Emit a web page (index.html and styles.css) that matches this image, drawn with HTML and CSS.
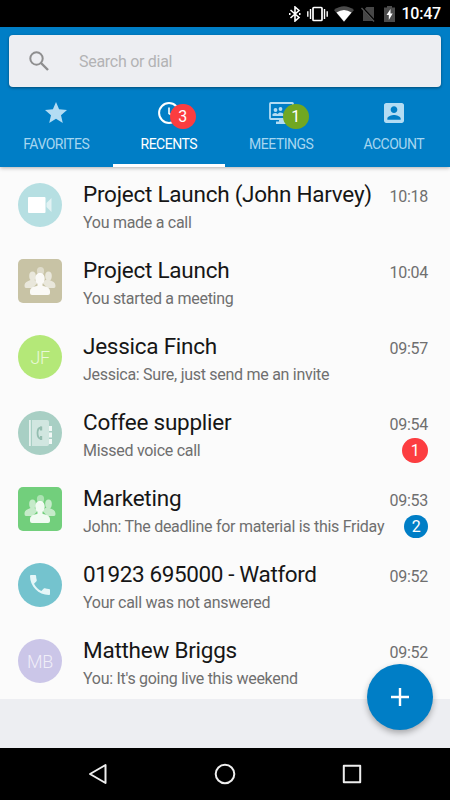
FILE: index.html
```html
<!DOCTYPE html>
<html lang="en">
<head>
<meta charset="utf-8">
<title>Recents</title>
<link rel="stylesheet" href="styles.css">
</head>
<body>
<svg class="defs" aria-hidden="true">
  <symbol id="people" viewBox="0 0 44 44">
    <g opacity=".42"><ellipse cx="22.500" cy="12" rx="3.600" ry="4"/></g>
    <g opacity=".6">
      <ellipse cx="14.500" cy="17" rx="3.300" ry="4.500"/><path d="M6.500 27c0-4 3-4.500 6-6h4l3 3-5 5H8q-1.500 0-1.500-2z"/>
      <ellipse cx="30.500" cy="17" rx="3.300" ry="4.500"/><path d="M37.500 27c0-4-3-4.500-6-6h-4l-3 3 5 5h6.500q1.500 0 1.500-2z"/>
    </g>
    <path opacity=".9" d="M17.300 19.500c0-3.500 2-5.500 4.700-5.500s4.700 2 4.700 5.500c0 2.500-.9 4.100-2.200 5.300v2c4 1.200 7.500 1.700 7.500 5.700v1.500q0 2-2 2H14q-2 0-2-2v-1.500c0-4 3.500-4.500 7.500-5.700v-2c-1.300-1.200-2.200-2.800-2.200-5.300z"/>
  </symbol>
</svg>
<div class="screen">
  <div class="status">
    <svg class="bluetooth" viewBox="0 0 12 16"><path d="M1.500 4l8.500 7.500L6 15V1l4 3.500L1.500 12" fill="none" stroke="#fff" stroke-width="1.600"/><path d="M0 7h1.500v2H0zM10 7h1.500v2H10z" fill="#fff"/></svg>
    <svg class="vibrate" viewBox="0 0 21 16"><rect x="6" y="1.500" width="9" height="13" rx=".8" fill="none" stroke="#fff" stroke-width="1.700"/><path d="M3.500 3v10M.8 5.300v5.400M17.500 3v10M20.200 5.300v5.400" stroke="#fff" stroke-width="1.400"/></svg>
    <svg class="wifi" viewBox="0 0 20 16"><path d="M0 4Q10-3.500 20 4L10 16z" fill="#4b4b4b"/><path d="M2.500 6.500Q10 1.500 17.500 6.500L10 15.500z" fill="#fff"/></svg>
    <svg class="sim" viewBox="0 0 14 16"><path d="M5.500 1H13v14H2V5z" fill="#474747"/><path d="M1 1.500l12.500 13.500" stroke="#000" stroke-width="2.500"/><path d="M.5 2l12.500 13.500" stroke="#555" stroke-width="1.300"/></svg>
    <svg class="battery" viewBox="0 0 11 16"><path d="M3 0h5v1.500h3V16H0V1.500h3z" fill="#4c4c4c"/><path d="M6.500 3L2.500 9h2.300v5L8.700 7.500H6.500z" fill="#fff"/></svg>
    <span class="clock">10:47</span>
  </div>
  <header class="header">
    <div class="search">
      <svg class="search-icon" viewBox="0 0 20 20"><circle cx="7.500" cy="7.500" r="6.200" fill="none" stroke="#8e8e8f" stroke-width="2"/><path d="M12 12l7 7" stroke="#8e8e8f" stroke-width="2.400"/></svg>
      <span>Search or dial</span>
    </div>
    <nav class="tabs">
      <div class="tab">
        <div class="tab-icon"><svg class="star" viewBox="2 2 20 20"><path d="M12 17.270L18.180 21l-1.640-7.030L22 9.240l-7.190-.61L12 2 9.190 8.630 2 9.240l5.460 4.730L5.820 21z"/></svg></div>
        <span class="label">FAVORITES</span>
      </div>
      <div class="tab active">
        <div class="tab-icon"><svg class="clock-icon" viewBox="0 0 22 22"><circle cx="11" cy="11" r="9.900" fill="none" stroke="#fff" stroke-width="2"/><path d="M11 5.500v6l4.500 2.500" fill="none" stroke="#fff" stroke-width="1.600"/></svg><b class="badge red">3</b></div>
        <span class="label">RECENTS</span>
      </div>
      <div class="tab">
        <div class="tab-icon"><svg class="monitor" viewBox="0 0 25 22"><rect x="1" y="1" width="23" height="16" rx=".7" fill="none" stroke="#b3dcf3" stroke-width="1.800"/><circle cx="6.500" cy="8" r="1.900"/><circle cx="11.500" cy="7" r="1.900"/><path d="M3.500 14v-2q3-2 5 0l2-1.500q3-.5 4.500 2V14zM10 17h5v2.500h3V22H7v-2.500h3z"/></svg><b class="badge green">1</b></div>
        <span class="label">MEETINGS</span>
      </div>
      <div class="tab">
        <div class="tab-icon"><svg viewBox="3 3 18 18"><path d="M3 5v14c0 1.100.89 2 2 2h14c1.100 0 2-.9 2-2V5c0-1.100-.9-2-2-2H5c-1.110 0-2 .9-2 2zm12 4c0 1.660-1.340 3-3 3s-3-1.340-3-3 1.340-3 3-3 3 1.340 3 3zm-9 8c0-2 4-3.100 6-3.100s6 1.100 6 3.100v1H6v-1z"/></svg></div>
        <span class="label">ACCOUNT</span>
      </div>
    </nav>
  </header>
  <main class="list">
    <article class="row">
      <div class="avatar video"><svg viewBox="0 0 44 44"><rect x="10" y="14" width="17.500" height="16" rx="1"/><path d="M28.500 20l5-5v14l-5-5z" opacity=".6"/></svg></div>
      <div class="text"><h2>Project Launch (John Harvey)</h2><p>You made a call</p></div>
      <div class="meta"><time>10:18</time></div>
    </article>
    <article class="row">
      <div class="avatar square sand"><svg><use href="#people"/></svg></div>
      <div class="text"><h2>Project Launch</h2><p>You started a meeting</p></div>
      <div class="meta"><time>10:04</time></div>
    </article>
    <article class="row">
      <div class="avatar lime">JF</div>
      <div class="text"><h2>Jessica Finch</h2><p>Jessica: Sure, just send me an invite</p></div>
      <div class="meta"><time>09:57</time></div>
    </article>
    <article class="row">
      <div class="avatar sage"><svg viewBox="0 0 44 44"><path d="M11 9h1.800v26H11z" opacity=".7"/><path d="M14 9h15q2 0 2 2v22q0 2-2 2H14z" opacity=".48"/><path d="M31 15h3v5h-3zm0 6.500h3v5h-3zm0 6.500h3v5h-3z" opacity=".85"/><path d="M23.500 16.500q-4 0-4 5.500t4 6" fill="none" stroke="#94bdb0" stroke-width="1.800"/><path d="M22 15.500h2.200v4H22zM22 25h2.200v4H22z" fill="#94bdb0"/></svg></div>
      <div class="text"><h2>Coffee supplier</h2><p>Missed voice call</p></div>
      <div class="meta"><time>09:54</time><b class="count red">1</b></div>
    </article>
    <article class="row">
      <div class="avatar square green-box"><svg><use href="#people"/></svg></div>
      <div class="text"><h2>Marketing</h2><p>John: The deadline for material is this Friday</p></div>
      <div class="meta"><time>09:53</time><b class="count blue">2</b></div>
    </article>
    <article class="row">
      <div class="avatar teal"><svg class="phone" viewBox="3 3 18 18"><path d="M6.620 10.790c1.440 2.830 3.760 5.140 6.590 6.590l2.200-2.200c.27-.27.67-.36 1.020-.24 1.120.37 2.330.57 3.570.57.55 0 1 .45 1 1V20c0 .55-.45 1-1 1-9.390 0-17-7.610-17-17 0-.55.45-1 1-1h3.500c.55 0 1 .45 1 1 0 1.250.2 2.450.57 3.570.11.35.03.74-.25 1.020z"/></svg></div>
      <div class="text"><h2 class="number">01923 695000 - Watford</h2><p>Your call was not answered</p></div>
      <div class="meta"><time>09:52</time></div>
    </article>
    <article class="row">
      <div class="avatar lilac">MB</div>
      <div class="text"><h2>Matthew Briggs</h2><p>You: It's going live this weekend</p></div>
      <div class="meta"><time>09:52</time></div>
    </article>
  </main>
  <div class="fab"><svg viewBox="0 0 20 20"><path d="M10 1v18M1 10h18" stroke="#fff" stroke-width="2.400"/></svg></div>
  <footer class="navbar">
    <svg viewBox="0 0 22 22"><path d="M18.500 2v18L3 11z"/></svg>
    <svg viewBox="0 0 22 22"><circle cx="11" cy="11" r="9.300"/></svg>
    <svg viewBox="0 0 22 22"><rect x="2.800" y="2.800" width="16.400" height="16.400"/></svg>
  </footer>
</div>
</body>
</html>
```
FILE: styles.css
```css
* { box-sizing: border-box; }
body { margin: 0; font-family: Roboto, sans-serif; }
.defs { position: absolute; width: 0; height: 0; }
.screen { position: relative; width: 450px; height: 800px; background: #edeef2; display: flex; flex-direction: column; overflow: hidden; }
.status { height: 27px; flex: none; background: #000; display: flex; align-items: center; justify-content: flex-end; padding-right: 9px; color: #fff; }
.status svg { height: 16px; }
.bluetooth { width: 12px; margin-right: 6px; }
.vibrate { width: 21px; margin-right: 6px; }
.wifi { width: 20px; margin-right: 7px; }
.sim { width: 14px; margin-right: 9px; }
.battery { width: 11px; margin-right: 7px; }
.clock { font-size: 16px; font-weight: 500; letter-spacing: -.2px; width: 39px; line-height: 27px; white-space: nowrap; display: flex; justify-content: flex-end; }
.header { height: 140px; flex: none; background: #007ec6; padding-top: 8px; position: relative; box-shadow: 0 1px 4px rgba(0,0,0,.3); display: flex; flex-direction: column; }
.search { height: 52px; flex: none; margin: 0 9px; border-radius: 4px; background: #edeef2; box-shadow: 0 1px 3px rgba(0,0,0,.4); display: flex; align-items: center; padding-left: 20px; color: #b3b3b5; font-size: 16px; letter-spacing: -.28px; }
.search-icon { width: 20px; height: 20px; margin-right: 30px; }
.tabs { flex: 1; display: grid; grid-template-columns: repeat(4, 1fr); }
.tab { display: flex; flex-direction: column; align-items: center; color: #a6d6f0; padding-top: 14px; }
.tab.active { color: #fff; border-bottom: 3px solid #fff; }
.tab-icon { position: relative; height: 24px; display: flex; align-items: center; }
.tab-icon svg { width: 20px; height: 20px; fill: #b3dcf3; }
.tab-icon .star { width: 22px; height: 22px; }
.tab-icon .clock-icon { width: 22px; height: 22px; }
.tab-icon .monitor { width: 25px; height: 22px; }
.label { font-size: 14px; letter-spacing: -.5px; line-height: 18px; margin-top: 10px; }
.badge { position: absolute; left: 12px; top: 3px; width: 26px; height: 25px; border-radius: 12.500px; color: #fff; font-size: 16px; font-weight: 400; line-height: 25px; text-align: center; }
.badge.green { left: 14px; }
.red { background: #fc3d40; }
.green { background: #71a722; }
.blue { background: #007ec6; }
.list { background: #fbfbfb; flex: none; }
.row { height: 76px; display: flex; padding: 0 22px 0 18px; }
.avatar { width: 44px; height: 44px; flex: none; margin: 16px 21px 0 0; border-radius: 50%; display: flex; align-items: center; justify-content: center; color: rgba(255,255,255,.72); font-size: 18px; font-weight: 300; letter-spacing: -.4px; }
.avatar svg { width: 44px; height: 44px; fill: #fff; }
.avatar .phone { width: 20px; height: 20px; fill: #e5f6f8; }
.square { border-radius: 5px; }
.video { background: #b6dfe2; }
.sand { background: #c8c3a5; }
.lime { background: #b4e878; }
.sage { background: #a8cfc4; }
.green-box { background: #72cf7c; }
.teal { background: #74c3ce; }
.lilac { background: #cbc6e8; }
.text { flex: 1; min-width: 0; white-space: nowrap; }
h2, p { margin: 0; font-weight: 400; }
h2 { font-size: 22.500px; letter-spacing: -.25px; line-height: 28px; margin-top: 13px; color: #161616; }
.number { letter-spacing: -.38px; }
p { font-size: 16px; letter-spacing: -.28px; line-height: 20px; margin-top: 5px; color: #6f6f6f; }
.meta { flex: none; padding-top: 20px; display: flex; flex-direction: column; align-items: flex-end; color: #6f6f6f; font-size: 16px; letter-spacing: -.25px; line-height: 20px; width: 39px; }
.count { width: 26px; height: 25px; margin-top: 3px; border-radius: 12.500px; color: #fff; font-size: 16px; font-weight: 400; line-height: 25px; text-align: center; }
.count.blue { width: 24px; height: 23px; margin-top: 4px; line-height: 23px; }
.fab { position: absolute; left: 367px; top: 664px; width: 66px; height: 66px; border-radius: 50%; background: #007ec6; box-shadow: 0 3px 6px rgba(0,0,0,.3); display: flex; align-items: center; justify-content: center; }
.fab svg { width: 20px; height: 20px; }
.navbar { height: 52px; flex: none; margin-top: auto; background: #000; display: flex; align-items: center; justify-content: center; gap: 105px; }
.navbar svg { width: 22px; height: 22px; fill: none; stroke: #eee; stroke-width: 2; stroke-linejoin: round; }
```
